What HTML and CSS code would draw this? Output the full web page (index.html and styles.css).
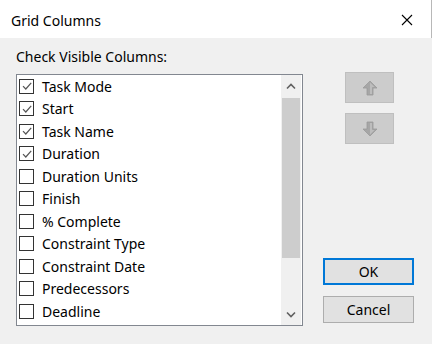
FILE: index.html
```html
<!DOCTYPE html>
<html>
<head>
<meta charset="utf-8">
<link rel="stylesheet" href="styles.css">
</head>
<body>
<div class="dialog">
  <div class="titlebar">
    <span class="title">Grid Columns</span>
    <svg class="close" width="12" height="12" viewBox="0 0 12 12"><path d="M1 1L11 11M11 1L1 11" stroke="#000" stroke-width="1.1"/></svg>
  </div>
  <div class="content">
    <div class="left">
      <div class="label">Check Visible Columns:</div>
      <div class="list">
        <div class="items">
          <div class="row"><span class="cb checked"><svg width="12" height="12" viewBox="0 0 12 12"><path d="M2 6.2L4.8 9L10.2 2.8" fill="none" stroke="#555" stroke-width="1.2"/></svg></span>Task Mode</div>
          <div class="row"><span class="cb checked"><svg width="12" height="12" viewBox="0 0 12 12"><path d="M2 6.2L4.8 9L10.2 2.8" fill="none" stroke="#555" stroke-width="1.2"/></svg></span>Start</div>
          <div class="row"><span class="cb checked"><svg width="12" height="12" viewBox="0 0 12 12"><path d="M2 6.2L4.8 9L10.2 2.8" fill="none" stroke="#555" stroke-width="1.2"/></svg></span>Task Name</div>
          <div class="row"><span class="cb checked"><svg width="12" height="12" viewBox="0 0 12 12"><path d="M2 6.2L4.8 9L10.2 2.8" fill="none" stroke="#555" stroke-width="1.2"/></svg></span>Duration</div>
          <div class="row"><span class="cb"></span>Duration Units</div>
          <div class="row"><span class="cb"></span>Finish</div>
          <div class="row"><span class="cb"></span>% Complete</div>
          <div class="row"><span class="cb"></span>Constraint Type</div>
          <div class="row"><span class="cb"></span>Constraint Date</div>
          <div class="row"><span class="cb"></span>Predecessors</div>
          <div class="row"><span class="cb"></span>Deadline</div>
        </div>
        <div class="scrollbar">
          <div class="sb-btn"><svg width="10" height="7" viewBox="0 0 10 7"><path d="M1 5.5L5 1.5L9 5.5" fill="none" stroke="#606060" stroke-width="1.6"/></svg></div>
          <div class="thumb"></div>
          <div class="track"></div>
          <div class="sb-btn"><svg width="10" height="7" viewBox="0 0 10 7"><path d="M1 1.5L5 5.5L9 1.5" fill="none" stroke="#606060" stroke-width="1.6"/></svg></div>
        </div>
      </div>
    </div>
    <div class="right">
      <div class="move up"><svg width="16" height="16" viewBox="0 0 16 16"><path d="M8 1L15 8H11V15H5V8H1Z" fill="#a6a6a6" stroke="#9a9a9a" stroke-width="0.8"/><path d="M8 2.5L12.5 7H10V14H8Z" fill="#bdbdbd"/></svg></div>
      <div class="move down"><svg width="16" height="16" viewBox="0 0 16 16"><path d="M8 15L15 8H11V1H5V8H1Z" fill="#a6a6a6" stroke="#9a9a9a" stroke-width="0.8"/><path d="M8 13.5L12.5 9H10V2H8Z" fill="#bdbdbd"/></svg></div>
      <div class="spacer"></div>
      <div class="btn ok">OK</div>
      <div class="btn cancel">Cancel</div>
    </div>
  </div>
</div>
</body>
</html>
```
FILE: styles.css
```css
* { box-sizing: border-box; }
html, body { margin: 0; padding: 0; }
body {
  width: 432px;
  height: 344px;
  overflow: hidden;
  font-family: "Noto Sans", "Open Sans", sans-serif;
  color: #000;
  background: #f0f0f0;
}
.dialog {
  width: 432px;
  height: 344px;
  display: flex;
  flex-direction: column;
}
.titlebar {
  height: 38px;
  background: #fff;
  display: flex;
  align-items: center;
  justify-content: space-between;
  padding: 2px 18px 0 11px;
  border-right: 1px solid #b8b8b8;
}
.title { font-size: 14px; }
.close { display: block; }
.content {
  flex: 1;
  display: flex;
  padding: 9px 0 0 16px;
  background: #f0f0f0;
}
.left {
  width: 287px;
  display: flex;
  flex-direction: column;
}
.label {
  font-size: 14px;
  line-height: 20px;
  height: 20px;
}
.list {
  margin-top: 7px;
  height: 252px;
  border: 1px solid #828790;
  background: #fff;
  display: flex;
  padding: 0 1px 0 2px;
}
.items {
  flex: 1;
  display: flex;
  flex-direction: column;
}
.row {
  height: 22.5px;
  display: flex;
  align-items: center;
  font-size: 14px;
  white-space: nowrap;
}
.cb {
  width: 15px;
  height: 15px;
  border: 1px solid #333;
  background: #fff;
  margin-right: 8px;
  display: flex;
  align-items: center;
  justify-content: center;
  flex: none;
}
.scrollbar {
  width: 20px;
  display: flex;
  flex-direction: column;
  background: #f0f0f0;
}
.sb-btn {
  height: 22px;
  display: flex;
  align-items: center;
  justify-content: center;
}
.thumb {
  height: 160px;
  margin: 1px 1px 0;
  background: #cdcdcd;
}
.track { flex: 1; }
.right {
  width: 91px;
  margin-left: 20px;
  height: 279px;
  display: flex;
  flex-direction: column;
}
.move {
  width: 49px;
  height: 31px;
  margin-left: 22px;
  background: #cccccc;
  border: 1px solid #bfbfbf;
  display: flex;
  align-items: center;
  justify-content: center;
}
.move.up { margin-top: 25px; }
.move.down { margin-top: 10px; }
.spacer { flex: 1; }
.btn {
  width: 91px;
  height: 27px;
  background: #e1e1e1;
  border: 1px solid #adadad;
  display: flex;
  align-items: center;
  justify-content: center;
  font-size: 14px;
}
.btn.ok { border: 2px solid #0078d7; }
.btn.cancel { margin-top: 11px; margin-bottom: 3px; }
```
